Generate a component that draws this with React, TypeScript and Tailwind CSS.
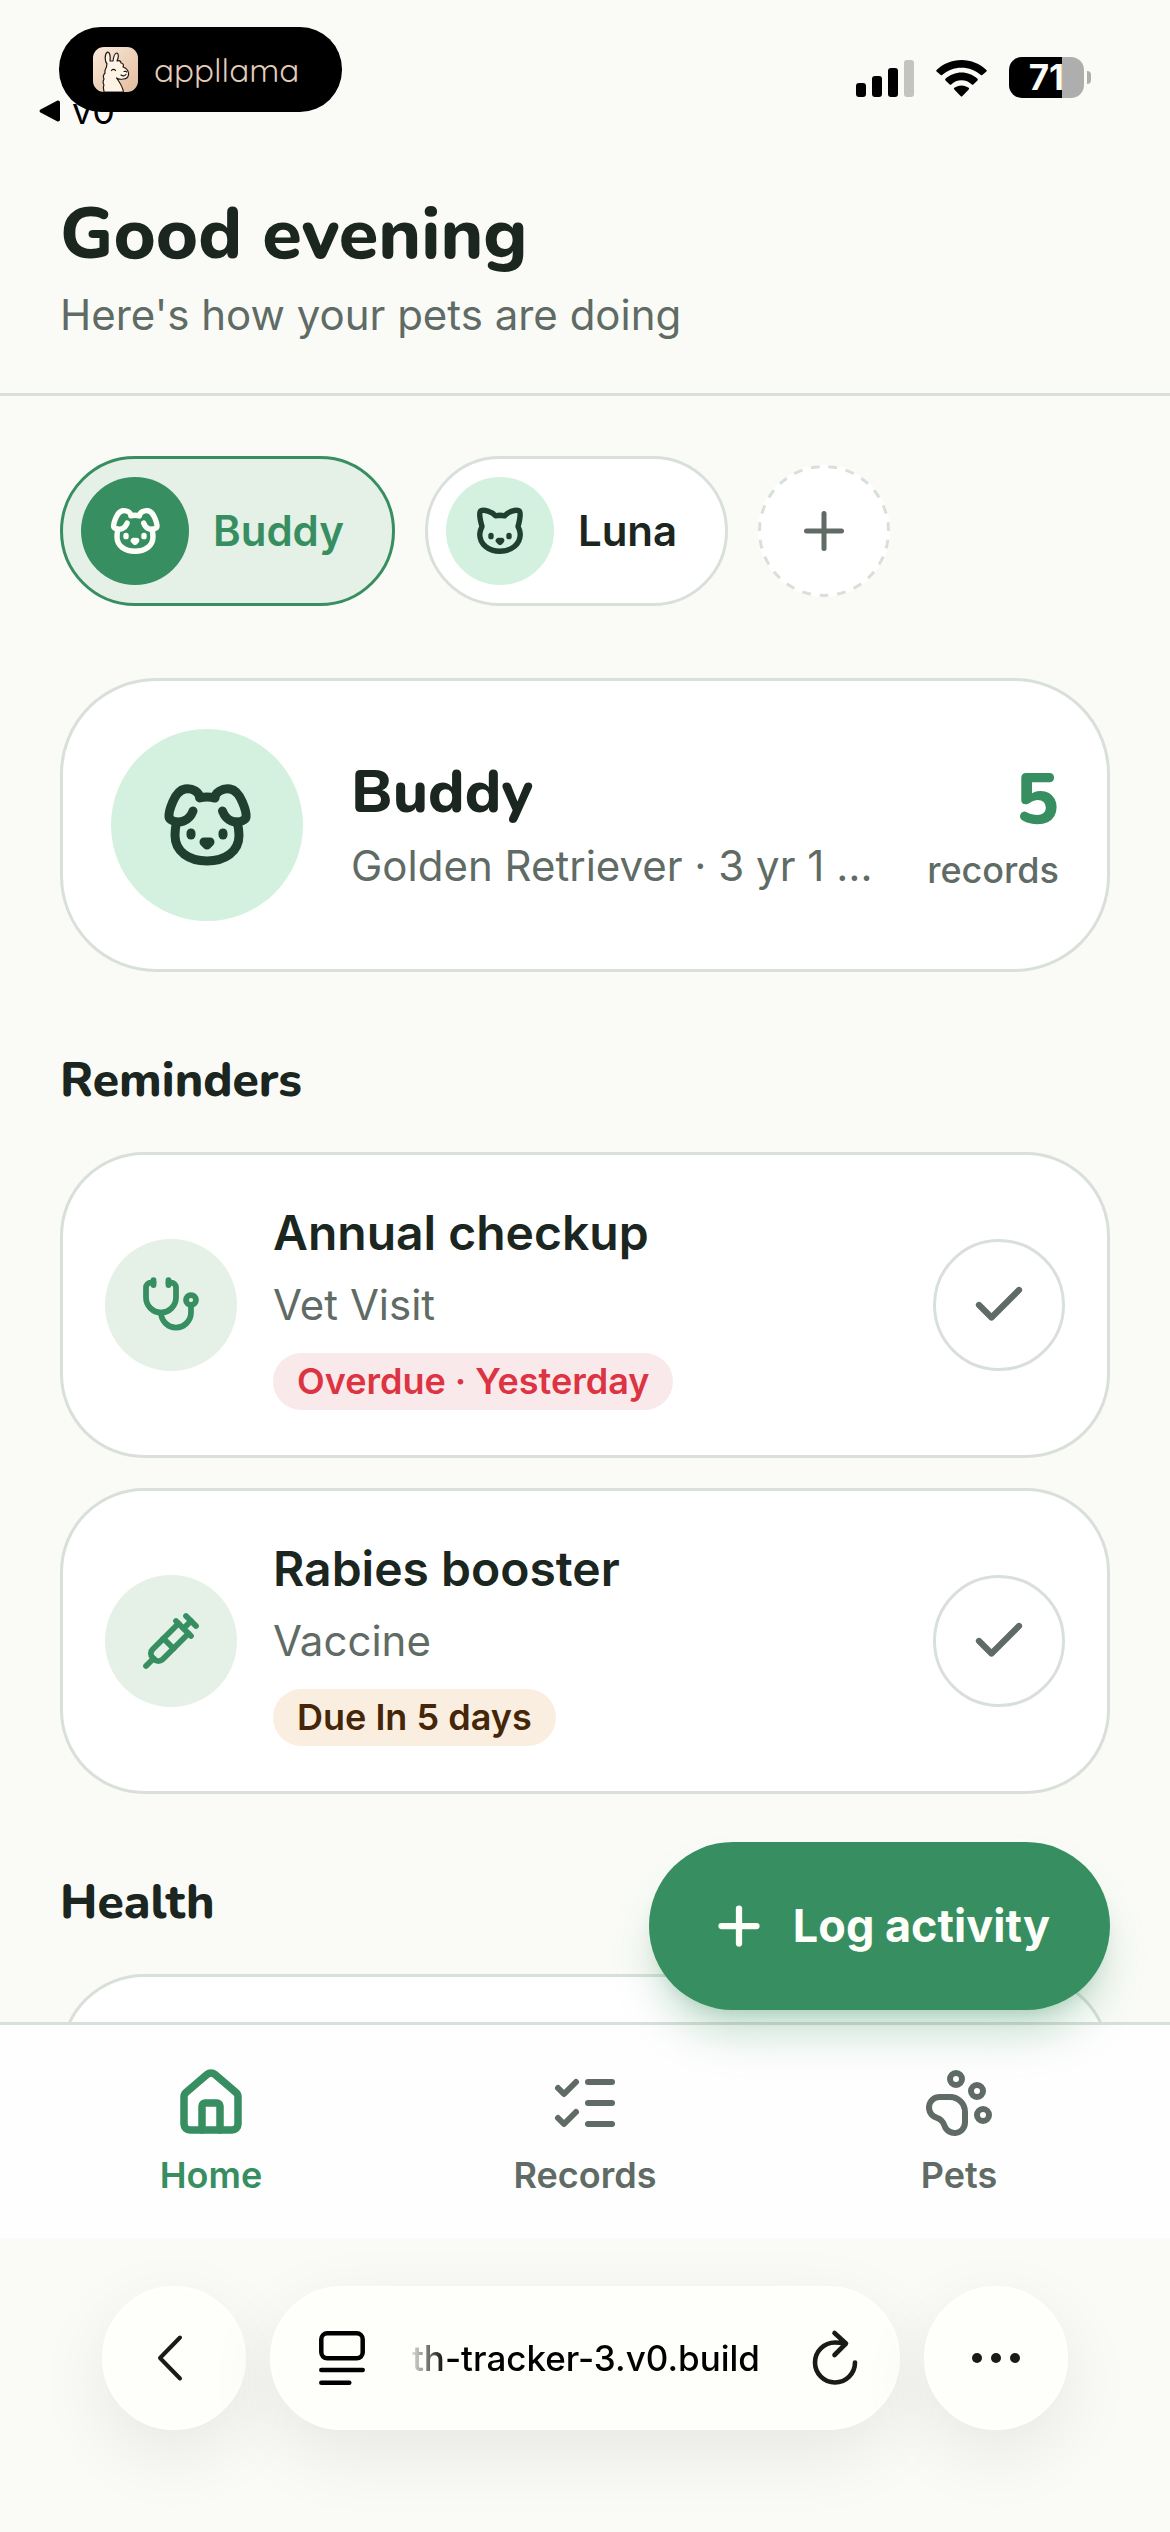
import React from 'react';
import { Cat, Check, Dog, House, ListChecks, PawPrint, Plus, Stethoscope, Syringe } from 'lucide-react';

const reminders = [
  {
    title: 'Annual checkup',
    type: 'Vet Visit',
    due: 'Overdue · Yesterday',
    icon: Stethoscope,
    badge: 'bg-[#fae9eb] text-[#dc3442]',
  },
  {
    title: 'Rabies booster',
    type: 'Vaccine',
    due: 'Due In 5 days',
    icon: Syringe,
    badge: 'bg-[#faeee1] text-[#452608]',
  },
];

const tabs = [
  { label: 'Home', icon: House, active: true },
  { label: 'Records', icon: ListChecks, active: false },
  { label: 'Pets', icon: PawPrint, active: false },
];

const LlamaMark: React.FC = () => (
  <svg viewBox="0 0 45 45" className="size-[45px]" fill="none" strokeLinecap="round" strokeLinejoin="round">
    <defs>
      <linearGradient id="llama" x1="0" y1="0" x2="1" y2="1">
        <stop offset="0" stopColor="#fbeadb" />
        <stop offset="1" stopColor="#e2bd9c" />
      </linearGradient>
    </defs>
    <rect width="45" height="45" rx="11" fill="url(#llama)" />
    <path
      d="M11 45c0-3-1.500-4 0-7-1.500-2-1-4 0-6-1-2-1-4 1-6-.5-3 .5-4 1.500-6 0-1 0-2 .5-3-2.500-3-2.500-10 .5-12 2.500 0 3 5 2.500 9l3 0c.5-4 2-8 4-8 2 1 1.500 5 0 8 2-1 4 0 4 2 2 0 3 2 2 4 3 1 5 3 5.500 6 .5 4-2 6-5 6-3 .5-6 0-7-1 3 4 6 8 7 14Z"
      fill="#fff3e6"
      stroke="#1f1a17"
      strokeWidth="1.200"
    />
    <path d="M18.500 23.500c1-1.500 3-1.500 4 0M31 24.500c1.500-.5 2.500 0 2.500.5M28 28c2 1.500 4 1 5-.5" stroke="#1f1a17" strokeWidth="1.200" />
  </svg>
);

const StatusBar: React.FC = () => (
  <div className="relative flex h-[141px] shrink-0 items-start justify-end pr-[79px] pt-[57px] text-black">
    <a href="#v0" className="absolute left-[39px] top-[90px] flex items-center gap-3 text-[36px] leading-[42px]">
      <svg viewBox="0 0 21 22" className="h-[22px] w-[21px]">
        <path d="M1.500 9.500 18.500.5Q21 0 21 2.500v17q0 2.500-2.500 2L1.500 12.500q-2-1.500 0-3Z" fill="currentColor" />
      </svg>
      v0
    </a>
    <div className="absolute left-[59px] top-[27px] flex h-[85px] w-[283px] items-center gap-4 rounded-[42px] bg-black pl-[34px]">
      <LlamaMark />
      <span className="font-[Quicksand,Nunito,Lato,sans-serif] text-[33px] leading-[48px] text-[#e3cdb9]">appllama</span>
    </div>

    <div className="flex h-[41px] items-center gap-[22px]">
      <svg viewBox="0 0 58 38" className="h-[38px] w-[58px]">
        <rect x="0" y="24" width="10" height="14" rx="3" />
        <rect x="16" y="17" width="10" height="21" rx="3" />
        <rect x="32" y="9" width="10" height="29" rx="3" />
        <rect x="48" y="1" width="10" height="37" rx="3" opacity=".22" />
      </svg>
      <svg viewBox="0 0 51 38" className="h-[38px] w-[51px]">
        <path d="M25.500 1C16 1 7 4.800.6 11q-.8.800 0 1.600L4.700 16q.6.600 1.400 0C11.300 11.300 18 8.700 25.500 8.700S39.700 11.300 44.900 16q.8.600 1.400 0l4.100-3.400q.8-.800 0-1.600C44 4.800 35 1 25.500 1Z" />
        <path d="M25.500 13.600c-6 0-11.700 2.400-16 6.200q-.8.800 0 1.600l4.200 4q.8.600 1.500 0c2.700-2.500 6.300-4.100 10.300-4.100s7.600 1.600 10.300 4.100q.7.600 1.500 0l4.200-4q.8-.800 0-1.600c-4.300-3.800-10-6.200-16-6.200Z" />
        <path d="M25.500 26.400c-2.700 0-5.200.9-7.200 2.400q-.9.800 0 1.700l6.500 6.700q.7.700 1.400 0l6.500-6.700q.9-.900 0-1.700c-2-1.500-4.500-2.400-7.200-2.400Z" />
      </svg>
      <div className="flex items-center gap-[3px]">
        <div className="flex h-[41px] w-[75px] items-center justify-center rounded-[13px] bg-linear-to-r from-black from-[71%] to-[#aeaeae] to-[71%] text-[35px] font-bold leading-none text-[#fafbf7]">
          71
        </div>
        <div className="h-[13px] w-1 rounded-r-full bg-[#aeaeae]" />
      </div>
    </div>
  </div>
);

const PetPicker: React.FC = () => (
  <div className="flex items-center gap-[30px]">
    <button className="flex items-center gap-6 rounded-full border-3 border-[#378e60] bg-[#e5f0e6] p-[18px] pr-12 text-[42px] font-semibold leading-[60px] text-[#378e60]">
      <span className="flex size-[108px] items-center justify-center rounded-full bg-[#378e60] text-[#fdfff8]">
        <Dog size={54} strokeWidth={2.4} />
      </span>
      Buddy
    </button>
    <button className="flex items-center gap-6 rounded-full border-3 border-[#d9e0da] bg-white p-[18px] pr-12 text-[42px] font-semibold leading-[60px]">
      <span className="flex size-[108px] items-center justify-center rounded-full bg-[#d4f1df] text-[#20402f]">
        <Cat size={54} strokeWidth={2.4} />
      </span>
      Luna
    </button>
    <button
      aria-label="Add pet"
      className="relative flex size-[132px] items-center justify-center rounded-full bg-white text-[#5f6b64]"
    >
      {/* dashed ring */}
      <svg viewBox="0 0 132 132" className="absolute inset-0 size-full -rotate-90" fill="none">
        <circle cx="66" cy="66" r="64.500" stroke="#d9e0da" strokeWidth="3" pathLength="46" strokeDasharray="1 1" strokeDashoffset="-0.5" />
      </svg>
      <Plus size={60} />
    </button>
  </div>
);

const PetCard: React.FC = () => (
  <section className="flex items-center gap-12 rounded-[96px] border-3 border-[#d9e0da] bg-white p-12">
    <div className="flex size-[192px] shrink-0 items-center justify-center rounded-full bg-[#d4f1df] text-[#20402f]">
      <Dog size={96} strokeWidth={2.25} />
    </div>
    <div className="flex min-w-0 flex-1 flex-col gap-[6px]">
      <h2 className="font-[Nunito,Lato,sans-serif] text-[60px] font-extrabold leading-[75px]">Buddy</h2>
      <p className="truncate text-[42px] leading-[60px] text-[#5f6b64]">Golden Retriever · 3 yr 1 mo</p>
    </div>
    <div className="flex flex-col items-end">
      <span className="font-[Nunito,Lato,sans-serif] text-[72px] font-extrabold leading-[90px] text-[#378e60]">5</span>
      <span className="text-[36px] font-medium leading-[51px] text-[#5f6b64]">records</span>
    </div>
  </section>
);

const Reminders: React.FC = () => (
  <section>
    <h2 className="mb-9 font-[Nunito,Lato,sans-serif] text-[48px] font-extrabold leading-[72px]">Reminders</h2>
    <ul className="flex flex-col gap-[30px]">
      {reminders.map((item) => (
        <li key={item.title} className="flex items-center gap-9 rounded-[84px] border-3 border-[#d9e0da] bg-white p-[42px]">
          <span className="flex size-[132px] shrink-0 items-center justify-center rounded-full bg-[#e5f0e6] text-[#378e60]">
            <item.icon size={60} strokeWidth={2.3} />
          </span>
          <div className="flex flex-1 flex-col items-start pb-[3px]">
            <h3 className="text-[48px] font-semibold leading-[72px]">{item.title}</h3>
            <p className="mt-[6px] text-[42px] leading-[60px] text-[#5f6b64]">{item.type}</p>
            <span className={`mt-[18px] rounded-full px-6 text-[36px] font-semibold leading-[57px] ${item.badge}`}>{item.due}</span>
          </div>
          <button
            aria-label={`Mark ${item.title} done`}
            className="flex size-[132px] shrink-0 items-center justify-center rounded-full border-3 border-[#d9e0da] bg-white text-[#5f6b64]"
          >
            <Check size={60} strokeWidth={2.5} />
          </button>
        </li>
      ))}
    </ul>
  </section>
);

const TabBar: React.FC = () => (
  <nav className="grid shrink-0 grid-cols-3 border-t-3 border-[#d9e0da] bg-[#fefefe] px-6 pb-[39px] pt-[42px]">
    {tabs.map((tab) => (
      <a
        key={tab.label}
        href={`#${tab.label.toLowerCase()}`}
        className={`flex flex-col items-center gap-3 text-[36px] font-semibold leading-[48px] ${tab.active ? 'text-[#378e60]' : 'text-[#5f6b64]'}`}
      >
        <tab.icon size={72} strokeWidth={tab.active ? 2.5 : 2} />
        {tab.label}
      </a>
    ))}
  </nav>
);

const BrowserBar: React.FC = () => (
  <div className="flex shrink-0 items-center gap-6 px-[102px] pb-[102px] pt-12 text-[#191b16]">
    <button
      aria-label="Back"
      className="flex size-36 shrink-0 items-center justify-center rounded-full border-3 border-white bg-[#fefffa] pr-2 shadow-[0_24px_72px_rgba(0,0,0,0.08)]"
    >
      <svg viewBox="0 0 26 50" className="h-[50px] w-[26px]" fill="none" stroke="currentColor" strokeWidth="4" strokeLinecap="round" strokeLinejoin="round">
        <path d="M23 4.500 3 25l20 20.500" />
      </svg>
    </button>
    <div className="flex h-36 min-w-0 flex-1 items-center rounded-full border-3 border-white bg-[#fefffa] pl-[46px] pr-[38px] shadow-[0_24px_72px_rgba(0,0,0,0.08)]">
      <button aria-label="Page menu" className="shrink-0 text-black">
        <svg viewBox="0 0 46 54" className="h-[54px] w-[46px]" fill="none" stroke="currentColor" strokeWidth="4.500" strokeLinecap="round">
          <rect x="2.300" y="2.300" width="41.400" height="25" rx="6" />
          <path d="M2.300 39h41.400M2.300 51.700h28" />
        </svg>
      </button>
      <input
        aria-label="Address"
        readOnly
        value="th-tracker-3.v0.build"
        className="ml-9 min-w-0 flex-1 bg-transparent text-right text-[35px] font-medium leading-[48px] text-black outline-none mask-[linear-gradient(to_right,transparent_6px,black_45px)]"
      />
      <button aria-label="Reload" className="ml-[51px] shrink-0">
        <svg viewBox="0 0 48 58" className="h-[58px] w-12" fill="none" stroke="currentColor" strokeWidth="4.600" strokeLinecap="round" strokeLinejoin="round">
          <path d="M44 33.500A20 20 0 1 1 24 13.500q5 0 10 1M23.500 4 35 14.500 23.500 26" />
        </svg>
      </button>
    </div>
    <button
      aria-label="More"
      className="flex size-36 shrink-0 items-center justify-center gap-[9px] rounded-full border-3 border-white bg-[#fefffa] shadow-[0_24px_72px_rgba(0,0,0,0.08)]"
    >
      <span className="size-[10px] rounded-full bg-current" />
      <span className="size-[10px] rounded-full bg-current" />
      <span className="size-[10px] rounded-full bg-current" />
    </button>
  </div>
);

const App: React.FC = () => {
  return (
    <div className="flex h-screen flex-col overflow-hidden bg-[#fafbf7] font-[Inter,sans-serif] text-[#1b2620]">
      <StatusBar />

      <header className="shrink-0 border-b-3 border-[#d9e0da] px-[60px] py-12">
        <h1 className="font-[Nunito,Lato,sans-serif] text-[72px] font-extrabold leading-[90px]">Good evening</h1>
        <p className="mt-[6px] text-[42px] leading-[60px] text-[#5f6b64]">Here's how your pets are doing</p>
      </header>

      <div className="relative z-10 flex min-h-0 flex-1 flex-col">
        <main className="flex min-h-0 flex-1 flex-col gap-[72px] overflow-hidden px-[60px] pt-[60px] *:shrink-0">
          <PetPicker />
          <PetCard />
          <Reminders />
          <section>
            <h2 className="mb-9 font-[Nunito,Lato,sans-serif] text-[48px] font-extrabold leading-[72px]">Health</h2>
            <div className="min-h-72 rounded-[84px] border-3 border-[#d9e0da] bg-white" />
          </section>
        </main>

        {/* Floating action */}
        <button className="absolute bottom-3 right-[60px] flex h-[168px] items-center gap-6 rounded-full bg-[#378e60] px-[60px] text-[45px] font-bold text-[#fdfff8] shadow-[0_30px_45px_-9px_rgba(55,142,96,0.3),0_12px_18px_-12px_rgba(55,142,96,0.3)]">
          <Plus size={60} strokeWidth={2.5} />
          Log activity
        </button>
      </div>

      <TabBar />
      <BrowserBar />
    </div>
  );
};

export default App;
